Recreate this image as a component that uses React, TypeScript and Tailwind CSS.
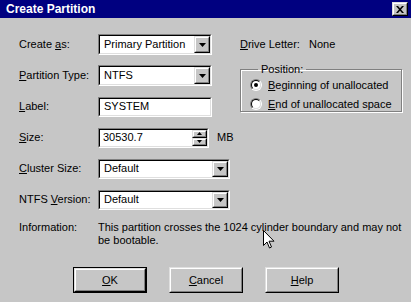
import React from 'react';

const Field: React.FC<{ className: string; children?: React.ReactNode }> = ({ className, children }) => (
  <div className={`border border-t-[#808080] border-l-[#808080] border-b-white border-r-white ${className}`}>
    <div className="h-full flex items-center bg-white border border-t-black border-l-black border-b-[#dfdfdf] border-r-[#dfdfdf]">
      {children}
    </div>
  </div>
);

const Raised: React.FC<{ className?: string; children?: React.ReactNode }> = ({ className = '', children }) => (
  <div className={`border border-t-[#dfdfdf] border-l-[#dfdfdf] border-r-black border-b-black bg-[#c6c6c6] ${className}`}>
    <div className="h-full flex items-center justify-center border border-t-white border-l-white border-r-[#808080] border-b-[#808080]">
      {children}
    </div>
  </div>
);

const Arrow = ({ up = false, size = 7 }: { up?: boolean; size?: number }) => (
  <svg width={size} height={Math.ceil(size / 2)} viewBox={`0 0 ${size} ${Math.ceil(size / 2)}`}>
    <polygon
      points={up ? `${size / 2},0 ${size},${Math.ceil(size / 2)} 0,${Math.ceil(size / 2)}` : `0,0 ${size},0 ${size / 2},${Math.ceil(size / 2)}`}
      fill="black"
    />
  </svg>
);

const Combo: React.FC<{ value: string; className: string }> = ({ value, className }) => (
  <Field className={className}>
    <span className="flex-1 pl-[4px] leading-none">{value}</span>
    <Raised className="w-[16px] h-full">
      <Arrow />
    </Raised>
  </Field>
);

const Row: React.FC<{ label: React.ReactNode; children: React.ReactNode }> = ({ label, children }) => (
  <div className="h-[31px] flex items-center">
    <div className="w-[79px] shrink-0">{label}</div>
    {children}
  </div>
);

const Radio = ({ checked }: { checked?: boolean }) => (
  <div className="w-[12px] h-[12px] rounded-full border border-t-[#808080] border-l-[#808080] border-r-white border-b-white">
    <div className="w-full h-full rounded-full flex items-center justify-center bg-white border border-t-black border-l-black border-r-[#dfdfdf] border-b-[#dfdfdf]">
      {checked && <div className="w-[4px] h-[4px] rounded-full bg-black" />}
    </div>
  </div>
);

const Button: React.FC<{ children: React.ReactNode; primary?: boolean }> = ({ children, primary }) => (
  <div className={`w-[74px] h-[26px] ${primary ? 'border border-black' : ''}`}>
    <Raised className="h-full">{children}</Raised>
  </div>
);

export default function App() {
  return (
    <div className="relative w-[411px] h-[302px] overflow-hidden bg-[#c6c6c6] text-black text-[11px] font-['Liberation_Sans',Arial,sans-serif]">
      <div className="h-[18px] bg-[#000080] flex items-center pl-[6px] pr-[3px]">
        <span className="flex-1 text-white font-bold text-[12px] leading-none">Create Partition</span>
        <Raised className="w-[16px] h-[14px]">
          <svg width="8" height="7" viewBox="0 0 8 7">
            <path d="M0 0 L2 0 L4 2.3 L6 0 L8 0 L5 3.5 L8 7 L6 7 L4 4.7 L2 7 L0 7 L3 3.5 Z" fill="black" />
          </svg>
        </Raised>
      </div>

      <div className="pl-[19px] pt-[11px]">
        <div className="flex">
          <div className="w-[193px]">
            <Row label={<>Create <u>a</u>s:</>}>
              <Combo value="Primary Partition" className="w-[114px] h-[21px]" />
            </Row>
            <Row label={<><u>P</u>artition Type:</>}>
              <Combo value="NTFS" className="w-[114px] h-[21px]" />
            </Row>
            <Row label={<><u>L</u>abel:</>}>
              <Field className="w-[114px] h-[20px]">
                <span className="pl-[4px] leading-none">SYSTEM</span>
              </Field>
            </Row>
          </div>
          <div className="ml-[28px]">
            <div className="h-[31px] flex items-center">
              <span className="w-[69px]"><u>D</u>rive Letter:</span>
              <span>None</span>
            </div>
            <fieldset className="mt-[3px] w-[162px] h-[49px] border border-[#808080] shadow-[inset_1px_1px_0_white,1px_1px_0_white] pl-[9px]">
              <legend className="ml-[8px] px-[3px] leading-[12px]">Position:</legend>
              <div className="flex items-center gap-[6px] h-[16px] mt-[2px]">
                <Radio checked />
                <span>
                  <u>B</u>eginning of unallocated
                </span>
              </div>
              <div className="flex items-center gap-[6px] h-[18px] mt-[2px]">
                <Radio />
                <span>
                  <u>E</u>nd of unallocated space
                </span>
              </div>
            </fieldset>
          </div>
        </div>

        <Row label={<><u>S</u>ize:</>}>
          <Field className="w-[111px] h-[20px]">
            <span className="flex-1 pl-[3px] leading-none">30530.7</span>
            <div className="w-[15px] h-full flex flex-col">
              <Raised className="flex-1">
                <Arrow up size={5} />
              </Raised>
              <Raised className="flex-1">
                <Arrow size={5} />
              </Raised>
            </div>
          </Field>
          <span className="ml-[8px]">MB</span>
        </Row>
        <Row label={<><u>C</u>luster Size:</>}>
          <Combo value="Default" className="w-[132px] h-[20px]" />
        </Row>
        <Row label={<>NTFS <u>V</u>ersion:</>}>
          <Combo value="Default" className="w-[132px] h-[20px]" />
        </Row>

        <div className="flex mt-[6px] leading-[13px]">
          <div className="w-[79px] shrink-0">Information:</div>
          <p className="w-[305px]">
            This partition crosses the 1024 cylinder boundary and may not be bootable.
          </p>
        </div>

        <div className="flex gap-[22px] ml-[54px] mt-[20px]">
          <Button primary>
            <span><u>O</u>K</span>
          </Button>
          <Button>
            <span><u>C</u>ancel</span>
          </Button>
          <Button>
            <span><u>H</u>elp</span>
          </Button>
        </div>
      </div>

      <svg className="absolute left-[263px] top-[230px]" width="12" height="19" viewBox="0 0 12 19">
        <path d="M0.5 0.5 L0.5 15.5 L4 12 L6.5 18 L8.5 17 L6 11.2 L11 11.2 Z" fill="white" stroke="black" strokeWidth="1" />
      </svg>
    </div>
  );
}
